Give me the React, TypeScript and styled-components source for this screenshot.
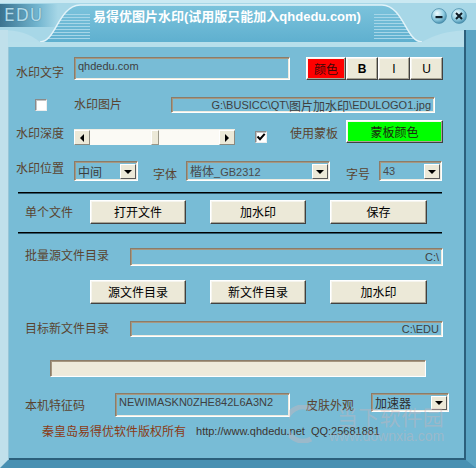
import React from "react";
import styled, { createGlobalStyle } from "styled-components";

const CJK = `"Noto Sans CJK SC", "Liberation Sans", sans-serif`;
const LAT = `"Liberation Sans", "Noto Sans CJK SC", sans-serif`;

const Global = createGlobalStyle`
  html, body { margin: 0; padding: 0; background: #ffffff; }
  body { font-family: ${CJK}; }
  * { box-sizing: border-box; }
`;

const Window = styled.div`
  position: relative;
  width: 476px;
  height: 468px;
  display: flex;
  flex-direction: column;
  overflow: hidden;
  background: #a7d7e7;
`;

/* ---------- title bar ---------- */
const TitleBar = styled.div`
  position: relative;
  height: 47px;
  flex-shrink: 0;
  display: flex;
  align-items: flex-start;
`;
const DecorSvg = styled.svg`
  position: absolute;
  left: 0;
  top: 0;
  z-index: 0;
`;
const EduMark = styled.span`
  position: relative;
  z-index: 1;
  margin: 5px 0 0 4px;
  width: 44px;
  font: 17px/20px "DejaVu Sans", sans-serif;
  letter-spacing: 1px;
  color: #b2dbea;
  text-shadow: 0 0 1px #2a6884;
`;
const TitleText = styled.span`
  position: relative;
  z-index: 1;
  margin: 9px 0 0 45px;
  font: bold 13px/16px ${LAT};
  color: #ffffff;
  white-space: nowrap;
`;
const Controls = styled.div`
  position: relative;
  z-index: 1;
  margin: 8px 9px 0 auto;
  display: flex;
  gap: 4px;
`;

const TAB = "M40 42 C56 42 58 6 80 5 L382 5 C404 6 406 42 422 42 Z";

const TitleDecor = () => {
  const stripesY: number[] = [];
  for (let y = 14; y <= 40; y += 3) stripesY.push(y);
  return (
    <DecorSvg width={476} height={47} viewBox="0 0 476 47">
      <defs>
        <linearGradient id="eduG" x1="0" x2="1" y1="0" y2="0">
          <stop offset="0" stopColor="#3a7390" />
          <stop offset="0.65" stopColor="#72b5cf" />
          <stop offset="1" stopColor="#a7d7e7" />
        </linearGradient>
        <linearGradient id="tabG" x1="0" x2="0" y1="0" y2="1">
          <stop offset="0" stopColor="#7cc3dc" />
          <stop offset="1" stopColor="#5fb0cf" />
        </linearGradient>
        <clipPath id="tabClip">
          <path d={TAB} />
        </clipPath>
      </defs>
      <rect width="476" height="47" fill="#a7d7e7" />
      <rect width="476" height="3" fill="#cbe9f2" />
      <rect x="0" y="4" width="58" height="23" fill="url(#eduG)" />
      <path d="M0 30 C20 30 30 34 40 42 L0 42 Z" fill="#b6deeb" />
      <path d="M476 30 C450 30 436 34 422 42 L476 42 Z" fill="#b6deeb" />
      <path d={TAB} fill="url(#tabG)" />
      <g clipPath="url(#tabClip)" stroke="#a6d6e8" strokeWidth="1">
        {stripesY.map((y) => (
          <line key={"l" + y} x1="40" y1={y + 0.5} x2="90" y2={y + 0.5} />
        ))}
        {stripesY.map((y) => (
          <line key={"r" + y} x1="374" y1={y + 0.5} x2="422" y2={y + 0.5} />
        ))}
      </g>
      <path d="M40 42 C56 42 58 6 80 5 L382 5 C404 6 406 42 422 42" fill="none" stroke="#e2f3f9" strokeWidth="1.5" />
      <rect x="0" y="42" width="476" height="5" fill="#b7dfeb" />
      <rect x="0" y="30" width="8" height="17" fill="#c0e0eb" />
      <rect x="466" y="30" width="10" height="17" fill="#5aa4c3" />
      <rect x="464" y="30" width="2" height="17" fill="#2b5f7b" />
    </DecorSvg>
  );
};

const Ball = ({ kind }: { kind: "min" | "close" }) => (
  <svg width="16" height="16" viewBox="0 0 16 16">
    <defs>
      <radialGradient id={"ball" + kind} cx="0.38" cy="0.32" r="0.75">
        <stop offset="0" stopColor="#f0fbfe" />
        <stop offset="0.55" stopColor="#93cfe3" />
        <stop offset="1" stopColor="#3c85a6" />
      </radialGradient>
    </defs>
    <circle cx="8" cy="8" r="7.4" fill={`url(#ball${kind})`} stroke="#4b8eab" strokeWidth="0.8" />
    {kind === "min" ? (
      <rect x="4.5" y="8" width="7" height="2.2" fill="#0f1c26" />
    ) : (
      <path d="M5 5 L11 11 M11 5 L5 11" stroke="#0f1c26" strokeWidth="2" />
    )}
  </svg>
);

/* ---------- body ---------- */
const Body = styled.div`
  flex: 1;
  display: flex;
  flex-direction: column;
  background: #78bcd6;
  border-left: 8px solid #c0e0eb;
  border-right: 10px solid #5aa4c3;
  border-bottom: 8px solid #4890b2;
  box-shadow: inset 1px 0 0 #96c6d8, inset -2px -2px 0 #2b5f7b;
`;

const Row = styled.div<{ $mt: number; $h: number }>`
  display: flex;
  align-items: center;
  flex-shrink: 0;
  height: ${(p) => p.$h}px;
  margin-top: ${(p) => p.$mt}px;
`;

type Align = "center" | "flex-start" | "flex-end";

const Label = styled.span<{ $ml: number; $w: number; $align?: Align; $mb?: number }>`
  margin-left: ${(p) => p.$ml}px;
  margin-bottom: ${(p) => p.$mb ?? 0}px;
  width: ${(p) => p.$w}px;
  flex-shrink: 0;
  align-self: ${(p) => p.$align ?? "center"};
  font: 12px/14px ${CJK};
  color: #5a4430;
  white-space: nowrap;
`;

const sunken = `
  border-style: solid;
  border-width: 1px;
  border-color: #8b7c69 #ffffff #ffffff #8b7c69;
  box-shadow: inset 1px 1px 0 #a69780, inset -1px -1px 0 #eeebe0;
`;

const Field = styled.div<{
  $ml: number;
  $w: number;
  $h: number;
  $end?: boolean;
  $top?: boolean;
  $bg?: string;
  $align?: Align;
}>`
  ${sunken}
  margin-left: ${(p) => p.$ml}px;
  width: ${(p) => p.$w}px;
  height: ${(p) => p.$h}px;
  flex-shrink: 0;
  align-self: ${(p) => p.$align ?? "center"};
  display: flex;
  justify-content: ${(p) => (p.$end ? "flex-end" : "flex-start")};
  align-items: ${(p) => (p.$top ? "flex-start" : "center")};
  padding: ${(p) => (p.$top ? "2px 3px 0 3px" : "0 3px")};
  background: ${(p) => p.$bg ?? "transparent"};
  font: 11px/13px ${LAT};
  color: #3f3f3f;
  white-space: nowrap;
  overflow: hidden;
`;

const Cjk = styled.span`
  font: 12px/13px ${CJK};
`;

const Btn = styled.button<{ $ml: number; $w: number; $h?: number; $bg?: string; $fg?: string; $align?: Align }>`
  margin-left: ${(p) => p.$ml}px;
  width: ${(p) => p.$w}px;
  height: ${(p) => p.$h ?? 24}px;
  flex-shrink: 0;
  align-self: ${(p) => p.$align ?? "center"};
  padding: 0;
  background: ${(p) => p.$bg ?? "#ece9d8"};
  border: 1px solid;
  border-color: #ffffff #404040 #404040 #ffffff;
  box-shadow: inset -1px -1px 0 #a9a594, inset 1px 1px 0 #f6f5ef;
  font: 12px/14px ${CJK};
  color: ${(p) => p.$fg ?? "#000000"};
  cursor: default;
`;

const LatinBtn = styled(Btn)<{ $bold?: boolean }>`
  font: ${(p) => (p.$bold ? "bold" : "normal")} 12px/14px ${LAT};
`;

const BtnGroup = styled.div<{ $ml: number }>`
  margin-left: ${(p) => p.$ml}px;
  display: flex;
  height: 23px;
`;

const Check = styled.span<{ $ml: number; $align?: Align; $mb?: number }>`
  margin-left: ${(p) => p.$ml}px;
  margin-bottom: ${(p) => p.$mb ?? 0}px;
  align-self: ${(p) => p.$align ?? "center"};
  width: 12px;
  height: 12px;
  flex-shrink: 0;
  background: #ffffff;
  border: 1px solid;
  border-color: #8a8a8a #eeeeee #eeeeee #8a8a8a;
  box-shadow: inset 1px 1px 0 #c4c4c4;
  display: flex;
  align-items: center;
  justify-content: center;
`;

const Combo = styled.div<{ $ml: number; $w: number; $h: number; $align?: Align; $fg?: string }>`
  ${sunken}
  margin-left: ${(p) => p.$ml}px;
  width: ${(p) => p.$w}px;
  height: ${(p) => p.$h}px;
  flex-shrink: 0;
  align-self: ${(p) => p.$align ?? "center"};
  display: flex;
  align-items: center;
  justify-content: space-between;
  padding-left: 3px;
  font: 11px/13px ${LAT};
  color: ${(p) => p.$fg ?? "#4a4a4a"};
  white-space: nowrap;
`;

const DropBtn = styled.span<{ $h: number }>`
  width: 16px;
  height: ${(p) => p.$h}px;
  margin-right: 1px;
  background: #ece9d8;
  border: 1px solid;
  border-color: #ffffff #5a5a5a #5a5a5a #ffffff;
  display: flex;
  align-items: center;
  justify-content: center;
  &::after {
    content: "";
    border-left: 4px solid transparent;
    border-right: 4px solid transparent;
    border-top: 4px solid #000000;
    margin-top: 1px;
  }
`;

const ScrollBar = styled.div<{ $ml: number; $w: number }>`
  margin-left: ${(p) => p.$ml}px;
  width: ${(p) => p.$w}px;
  height: 16px;
  align-self: flex-end;
  flex-shrink: 0;
  display: flex;
  background: #fbfaf5;
  border-top: 1px solid #f2efe4;
`;

const ArrowBtn = styled.span<{ $dir: "left" | "right" }>`
  width: 16px;
  height: 15px;
  flex-shrink: 0;
  background: #ece9d8;
  border: 1px solid;
  border-color: #ffffff #8c8a80 #8c8a80 #ffffff;
  display: flex;
  align-items: center;
  justify-content: center;
  &::after {
    content: "";
    border-top: 4px solid transparent;
    border-bottom: 4px solid transparent;
    ${(p) => (p.$dir === "left" ? "border-right: 4px solid #000;" : "border-left: 4px solid #000;")}
  }
`;

const Track = styled.div`
  flex: 1;
  display: flex;
`;

const Thumb = styled.span`
  width: 8px;
  height: 15px;
  background: #ece9d8;
  border: 1px solid;
  border-color: #ffffff #9a9789 #9a9789 #ffffff;
`;

const Rule = styled.div<{ $mt: number }>`
  margin: ${(p) => p.$mt}px 0 0 10px;
  width: 424px;
  height: 2px;
  flex-shrink: 0;
  border-top: 1px solid #000000;
  border-bottom: 1px solid #2f5a6d;
`;

const Footer = styled.div`
  display: flex;
  align-items: center;
  height: 14px;
  margin-top: 7px;
  padding-left: 34px;
  white-space: nowrap;
`;
const FooterCjk = styled.span`
  font: 12px/14px ${CJK};
  color: #8a3a14;
`;
const FooterLatin = styled.span<{ $ml: number }>`
  margin-left: ${(p) => p.$ml}px;
  font: 11px/14px ${LAT};
  color: #3c3430;
`;

/* ---------- download-site watermark (overlay) ---------- */
const Watermark = styled.div`
  position: absolute;
  left: 289px;
  top: 404px;
  display: flex;
  align-items: center;
  gap: 14px;
  pointer-events: none;
  color: rgba(205, 180, 185, 0.42);
`;
const WmText = styled.div`
  display: flex;
  flex-direction: column;
  align-items: flex-end;
`;
const WmBig = styled.span`
  font: 21px/24px ${CJK};
  letter-spacing: 0.5px;
`;
const WmSmall = styled.span`
  font: 14px/16px ${LAT};
`;

const CheckMark = () => (
  <svg width="10" height="10" viewBox="0 0 10 10">
    <path d="M1.5 4.5 L4 7.2 L8.7 1.8" fill="none" stroke="#000" strokeWidth="2" />
  </svg>
);

const depth = 0.5;
const TRACK_W = 161 - 32;
const THUMB_W = 8;

export default function App() {
  return (
    <>
      <Global />
      <Window>
        <TitleBar>
          <TitleDecor />
          <EduMark>EDU</EduMark>
          <TitleText>易得优图片水印(试用版只能加入qhdedu.com)</TitleText>
          <Controls>
            <Ball kind="min" />
            <Ball kind="close" />
          </Controls>
        </TitleBar>

        <Body>
          <Row $mt={10} $h={23}>
            <Label $ml={8} $w={48} $align="flex-end" $mb={1}>水印文字</Label>
            <Field $ml={10} $w={216} $h={23} $top>qhdedu.com</Field>
            <BtnGroup $ml={16}>
              <Btn $ml={0} $w={40} $h={23} $bg="#ff0000" $fg="#3a0808">颜色</Btn>
              <LatinBtn $ml={0} $w={32} $h={23} $bold>B</LatinBtn>
              <LatinBtn $ml={0} $w={32} $h={23}>I</LatinBtn>
              <LatinBtn $ml={0} $w={33} $h={23}>U</LatinBtn>
            </BtnGroup>
          </Row>

          <Row $mt={17} $h={16}>
            <Check $ml={27} />
            <Label $ml={27} $w={48} $align="flex-start">水印图片</Label>
            <Field $ml={49} $w={264} $h={16} $end>
              G:\BUSICC\QT\<Cjk>图片加水印</Cjk>\EDULOGO1.jpg
            </Field>
          </Row>

          <Row $mt={7} $h={25}>
            <Label $ml={8} $w={48}>水印深度</Label>
            <ScrollBar $ml={10} $w={161}>
              <ArrowBtn $dir="left" />
              <Track>
                <Thumb style={{ marginLeft: Math.round((TRACK_W - THUMB_W) * depth) }} />
              </Track>
              <ArrowBtn $dir="right" />
            </ScrollBar>
            <Check $ml={20} $align="flex-end" $mb={2}>
              <CheckMark />
            </Check>
            <Label $ml={23} $w={48}>使用蒙板</Label>
            <Btn $ml={8} $w={97} $h={23} $bg="#00ff00" $fg="#1a2a10" $align="flex-start">蒙板颜色</Btn>
          </Row>

          <Row $mt={16} $h={20}>
            <Label $ml={8} $w={48} $align="flex-start">水印位置</Label>
            <Combo $ml={10} $w={64} $h={20} $fg="#3c3c3c">
              <Cjk>中间</Cjk>
              <DropBtn $h={15} />
            </Combo>
            <Label $ml={15} $w={24} $align="flex-end">字体</Label>
            <Combo $ml={9} $w={144} $h={20}>
              <span>
                <Cjk>楷体</Cjk>_GB2312
              </span>
              <DropBtn $h={15} />
            </Combo>
            <Label $ml={16} $w={24} $align="flex-end">字号</Label>
            <Combo $ml={9} $w={63} $h={20}>
              43
              <DropBtn $h={15} />
            </Combo>
          </Row>

          <Rule $mt={11} />

          <Row $mt={6} $h={24}>
            <Label $ml={17} $w={48}>单个文件</Label>
            <Btn $ml={17} $w={96}>打开文件</Btn>
            <Btn $ml={24} $w={96}>加水印</Btn>
            <Btn $ml={24} $w={97}>保存</Btn>
          </Row>

          <Rule $mt={8} />

          <Row $mt={14} $h={18}>
            <Label $ml={17} $w={84} $align="flex-start">批量源文件目录</Label>
            <Field $ml={21} $w={313} $h={18} $end>C:\</Field>
          </Row>

          <Row $mt={14} $h={24}>
            <Btn $ml={82} $w={96}>源文件目录</Btn>
            <Btn $ml={24} $w={96}>新文件目录</Btn>
            <Btn $ml={24} $w={97}>加水印</Btn>
          </Row>

          <Row $mt={17} $h={16}>
            <Label $ml={17} $w={84} $align="flex-start">目标新文件目录</Label>
            <Field $ml={21} $w={313} $h={16} $end>C:\EDU</Field>
          </Row>

          <Row $mt={23} $h={17}>
            <Field $ml={42} $w={376} $h={17} $bg="#eeeadb" />
          </Row>

          <Row $mt={16} $h={24}>
            <Label $ml={17} $w={60}>本机特征码</Label>
            <Field $ml={30} $w={175} $h={24} $top>NEWIMASKN0ZHE842L6A3N2</Field>
            <Label $ml={16} $w={48}>皮肤外观</Label>
            <Combo $ml={17} $w={78} $h={19} $align="flex-start" $fg="#2e2e2e">
              <Cjk>加速器</Cjk>
              <DropBtn $h={14} />
            </Combo>
          </Row>

          <Footer>
            <FooterCjk>秦皇岛易得优软件版权所有</FooterCjk>
            <FooterLatin $ml={10}>http://www.qhdedu.net</FooterLatin>
            <FooterLatin $ml={6}>QQ:25681881</FooterLatin>
          </Footer>
        </Body>

        <Watermark>
          <svg width="26" height="38" viewBox="0 0 26 38">
            <path d="M22 4 A17 17 0 1 0 22 34" fill="none" stroke="currentColor" strokeWidth="5" />
          </svg>
          <WmText>
            <WmBig>当下软件园</WmBig>
            <WmSmall>www.downxia.com</WmSmall>
          </WmText>
        </Watermark>
      </Window>
    </>
  );
}
